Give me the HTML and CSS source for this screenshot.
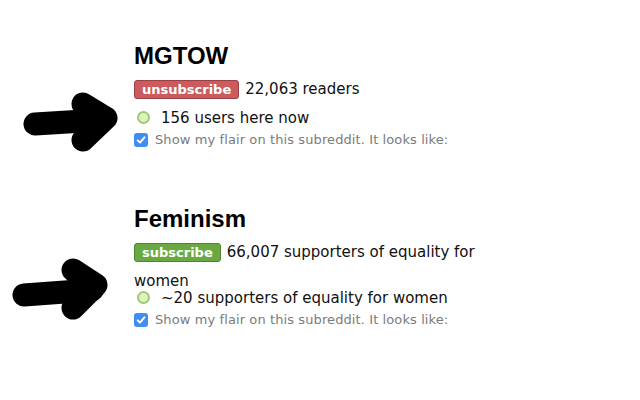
FILE: index.html
```html
<!DOCTYPE html>
<html>
<head>
<meta charset="utf-8">
<link rel="stylesheet" href="styles.css">
</head>
<body>
<div class="page">
  <section class="sub">
    <h1 class="sub-title">MGTOW</h1>
    <div class="sub-count"><span class="btn btn-unsub">unsubscribe</span><span class="count">22,063 readers</span></div>
    <div class="online"><span class="dot"></span>156 users here now</div>
    <div class="flair"><span class="check"><svg width="14" height="14" viewBox="0 0 14 14"><path d="M3.7 7.3 L6 9.6 L10.4 4.3" fill="none" stroke="#fff" stroke-width="1.9" stroke-linecap="round" stroke-linejoin="round"/></svg></span>Show my flair on this subreddit. It looks like:</div>
  </section>
  <section class="sub">
    <h1 class="sub-title">Feminism</h1>
    <div class="sub-count"><span class="btn btn-sub">subscribe</span><span class="count">66,007 supporters of equality for</span> <span class="count">women</span></div>
    <div class="online"><span class="dot"></span>~20 supporters of equality for women</div>
    <div class="flair"><span class="check"><svg width="14" height="14" viewBox="0 0 14 14"><path d="M3.7 7.3 L6 9.6 L10.4 4.3" fill="none" stroke="#fff" stroke-width="1.9" stroke-linecap="round" stroke-linejoin="round"/></svg></span>Show my flair on this subreddit. It looks like:</div>
  </section>
  <svg class="arrows" width="640" height="400" viewBox="0 0 640 400">
    <g fill="none" stroke="#000" stroke-width="23" stroke-linecap="round" stroke-linejoin="round">
      <path d="M35 124 L100 120"/>
      <path d="M83 104 L106 118 L83 140"/>
      <path d="M24 295 L92 290"/>
      <path d="M73 270 L96 285 L73 308"/>
    </g>
  </svg>
</div>
</body>
</html>
```
FILE: styles.css
```css
html, body {
  margin: 0;
  padding: 0;
  background: #fff;
}
.page {
  position: relative;
  width: 640px;
  height: 400px;
  padding: 42px 0 0 134px;
  box-sizing: border-box;
  font-family: "DejaVu Sans", Verdana, sans-serif;
  color: #111;
  overflow: hidden;
}
.sub {
  width: 360px;
  margin-bottom: 57px;
}
.sub-title {
  margin: 0 0 10px 0;
  font-family: "Liberation Sans", Arial, sans-serif;
  font-weight: bold;
  font-size: 24px;
  line-height: 28px;
  color: #000;
}
.sub-count {
  font-size: 15px;
  line-height: 17px;
}
.btn {
  display: inline-block;
  font-size: 13px;
  font-weight: bold;
  line-height: 15px;
  padding: 1px 7px;
  border: 1px solid;
  border-radius: 3px;
  color: #fff;
  margin: 0 6px 11px 0;
  vertical-align: baseline;
}
.btn-unsub {
  background: #cb5b5d;
  border-color: #9b4143;
}
.btn-sub {
  background: #6aa942;
  border-color: #4d8530;
}
.online {
  font-size: 15px;
  line-height: 17px;
}
.dot {
  display: inline-block;
  width: 9px;
  height: 9px;
  border: 2px solid #9ccc6e;
  background: #dcf2c6;
  border-radius: 50%;
  margin: 0 11px 0 3px;
  vertical-align: -1px;
}
.flair {
  margin-top: 5px;
  font-size: 13px;
  line-height: 16px;
  letter-spacing: 0.1px;
  color: #7b7b7b;
}
.check {
  display: inline-block;
  width: 14px;
  height: 14px;
  background: #3f8ef2;
  border-radius: 3px;
  margin-right: 7px;
  vertical-align: -3px;
}
.check svg {
  display: block;
}
.arrows {
  position: absolute;
  left: 0;
  top: 0;
  pointer-events: none;
}
```
